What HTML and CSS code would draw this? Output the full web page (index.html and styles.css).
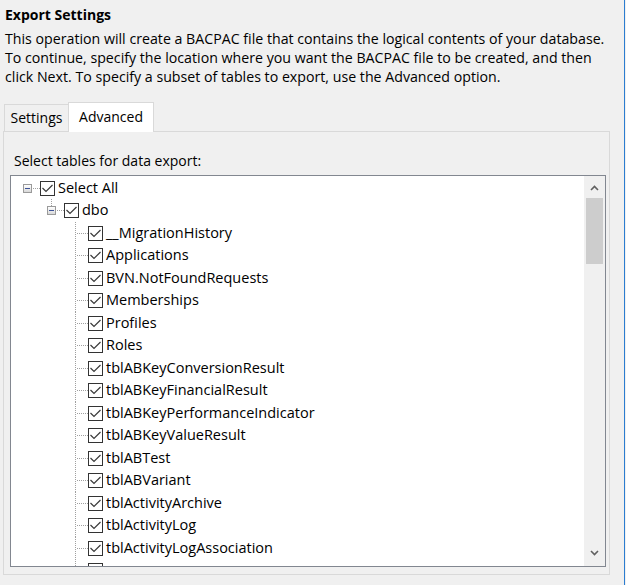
FILE: index.html
```html
<!DOCTYPE html>
<html>
<head>
<meta charset="utf-8">
<link rel="stylesheet" href="styles.css">
</head>
<body>
<div class="window">
  <h1 class="title">Export Settings</h1>
  <p class="desc">This operation will create a BACPAC file that contains the logical contents of your database.<br>To continue, specify the location where you want the BACPAC file to be created, and then<br>click Next. To specify a subset of tables to export, use the Advanced option.</p>
  <div class="tabs">
    <div class="tab-strip">
      <div class="tab">Settings</div>
      <div class="tab active">Advanced</div>
    </div>
    <div class="tab-panel">
      <div class="label">Select tables for data export:</div>
      <div class="tree">
        <div class="tree-items">
          <div class="row l0">
            <div class="gutter g-root"><span class="expander"><span class="minus"></span></span></div>
            <span class="check"><svg viewBox="0 0 13 13" width="13" height="13"><polyline points="1.5,6 5,9.5 11.5,3" fill="none" stroke="#3a3a3a" stroke-width="1.2"/></svg></span>
            <span class="text">Select All</span>
          </div>
          <div class="row l1">
            <div class="gutter g-last"><span class="expander"><span class="minus"></span></span></div>
            <span class="check"><svg viewBox="0 0 13 13" width="13" height="13"><polyline points="1.5,6 5,9.5 11.5,3" fill="none" stroke="#3a3a3a" stroke-width="1.2"/></svg></span>
            <span class="text">dbo</span>
          </div>
          <div class="row l2"><div class="gutter g-mid"></div><span class="check"><svg viewBox="0 0 13 13" width="13" height="13"><polyline points="1.5,6 5,9.5 11.5,3" fill="none" stroke="#3a3a3a" stroke-width="1.2"/></svg></span><span class="text">__MigrationHistory</span></div>
          <div class="row l2"><div class="gutter g-mid"></div><span class="check"><svg viewBox="0 0 13 13" width="13" height="13"><polyline points="1.5,6 5,9.5 11.5,3" fill="none" stroke="#3a3a3a" stroke-width="1.2"/></svg></span><span class="text">Applications</span></div>
          <div class="row l2"><div class="gutter g-mid"></div><span class="check"><svg viewBox="0 0 13 13" width="13" height="13"><polyline points="1.5,6 5,9.5 11.5,3" fill="none" stroke="#3a3a3a" stroke-width="1.2"/></svg></span><span class="text">BVN.NotFoundRequests</span></div>
          <div class="row l2"><div class="gutter g-mid"></div><span class="check"><svg viewBox="0 0 13 13" width="13" height="13"><polyline points="1.5,6 5,9.5 11.5,3" fill="none" stroke="#3a3a3a" stroke-width="1.2"/></svg></span><span class="text">Memberships</span></div>
          <div class="row l2"><div class="gutter g-mid"></div><span class="check"><svg viewBox="0 0 13 13" width="13" height="13"><polyline points="1.5,6 5,9.5 11.5,3" fill="none" stroke="#3a3a3a" stroke-width="1.2"/></svg></span><span class="text">Profiles</span></div>
          <div class="row l2"><div class="gutter g-mid"></div><span class="check"><svg viewBox="0 0 13 13" width="13" height="13"><polyline points="1.5,6 5,9.5 11.5,3" fill="none" stroke="#3a3a3a" stroke-width="1.2"/></svg></span><span class="text">Roles</span></div>
          <div class="row l2"><div class="gutter g-mid"></div><span class="check"><svg viewBox="0 0 13 13" width="13" height="13"><polyline points="1.5,6 5,9.5 11.5,3" fill="none" stroke="#3a3a3a" stroke-width="1.2"/></svg></span><span class="text">tblABKeyConversionResult</span></div>
          <div class="row l2"><div class="gutter g-mid"></div><span class="check"><svg viewBox="0 0 13 13" width="13" height="13"><polyline points="1.5,6 5,9.5 11.5,3" fill="none" stroke="#3a3a3a" stroke-width="1.2"/></svg></span><span class="text">tblABKeyFinancialResult</span></div>
          <div class="row l2"><div class="gutter g-mid"></div><span class="check"><svg viewBox="0 0 13 13" width="13" height="13"><polyline points="1.5,6 5,9.5 11.5,3" fill="none" stroke="#3a3a3a" stroke-width="1.2"/></svg></span><span class="text">tblABKeyPerformanceIndicator</span></div>
          <div class="row l2"><div class="gutter g-mid"></div><span class="check"><svg viewBox="0 0 13 13" width="13" height="13"><polyline points="1.5,6 5,9.5 11.5,3" fill="none" stroke="#3a3a3a" stroke-width="1.2"/></svg></span><span class="text">tblABKeyValueResult</span></div>
          <div class="row l2"><div class="gutter g-mid"></div><span class="check"><svg viewBox="0 0 13 13" width="13" height="13"><polyline points="1.5,6 5,9.5 11.5,3" fill="none" stroke="#3a3a3a" stroke-width="1.2"/></svg></span><span class="text">tblABTest</span></div>
          <div class="row l2"><div class="gutter g-mid"></div><span class="check"><svg viewBox="0 0 13 13" width="13" height="13"><polyline points="1.5,6 5,9.5 11.5,3" fill="none" stroke="#3a3a3a" stroke-width="1.2"/></svg></span><span class="text">tblABVariant</span></div>
          <div class="row l2"><div class="gutter g-mid"></div><span class="check"><svg viewBox="0 0 13 13" width="13" height="13"><polyline points="1.5,6 5,9.5 11.5,3" fill="none" stroke="#3a3a3a" stroke-width="1.2"/></svg></span><span class="text">tblActivityArchive</span></div>
          <div class="row l2"><div class="gutter g-mid"></div><span class="check"><svg viewBox="0 0 13 13" width="13" height="13"><polyline points="1.5,6 5,9.5 11.5,3" fill="none" stroke="#3a3a3a" stroke-width="1.2"/></svg></span><span class="text">tblActivityLog</span></div>
          <div class="row l2"><div class="gutter g-mid"></div><span class="check"><svg viewBox="0 0 13 13" width="13" height="13"><polyline points="1.5,6 5,9.5 11.5,3" fill="none" stroke="#3a3a3a" stroke-width="1.2"/></svg></span><span class="text">tblActivityLogAssociation</span></div>
          <div class="row l2"><div class="gutter g-mid"></div><span class="check"><svg viewBox="0 0 13 13" width="13" height="13"><polyline points="1.5,6 5,9.5 11.5,3" fill="none" stroke="#3a3a3a" stroke-width="1.2"/></svg></span></div>
        </div>
        <div class="scrollbar">
          <div class="sb-btn sb-up"><svg viewBox="0 0 9 6" width="9" height="6"><polyline points="1,5 4.5,1.5 8,5" fill="none" stroke="#606060" stroke-width="1.6"/></svg></div>
          <div class="sb-track"><div class="sb-thumb"></div></div>
          <div class="sb-btn sb-down"><svg viewBox="0 0 9 6" width="9" height="6"><polyline points="1,1 4.5,4.5 8,1" fill="none" stroke="#606060" stroke-width="1.6"/></svg></div>
        </div>
      </div>
    </div>
  </div>
</div>
</body>
</html>
```

FILE: styles.css
```css
* { box-sizing: border-box; }
html, body { margin: 0; padding: 0; }
body {
  font-family: "Open Sans", "Noto Sans", sans-serif;
  font-size: 14px;
  color: #000;
  background: #f0f0f0;
}
.window {
  width: 626px;
  height: 585px;
  overflow: hidden;
  padding-top: 5px;
  background:
    linear-gradient(to left, #f0f0f0 0 1px, #2b7dd1 1px 2px, transparent 2px),
    #f0f0f0;
}
.title {
  margin: 0 0 0 5px;
  font-size: 14px;
  font-weight: 700;
  line-height: 19px;
}
.desc {
  margin: 5px 0 0 5px;
  font-size: 14.2px;
  line-height: 19px;
}
.tabs {
  margin: 16px 0 0 3px;
  width: 607px;
}
.tab-strip {
  display: flex;
  align-items: flex-end;
  height: 29px;
  padding-left: 1px;
  position: relative;
  z-index: 1;
}
.tab {
  width: 65px;
  height: 27px;
  border: 1px solid #d9d9d9;
  border-bottom: none;
  background: #f0f0f0;
  text-align: center;
  line-height: 26px;
}
.tab.active {
  width: 86px;
  height: 30px;
  margin-left: -1px;
  margin-bottom: -1px;
  background: #fff;
  line-height: 27px;
}
.tab-panel {
  height: 444px;
  border: 1px solid #d9d9d9;
  padding: 19px 0 0 6px;
}
.label {
  padding-left: 4px;
  line-height: 19px;
}
.tree {
  margin-top: 5px;
  width: 596px;
  height: 392px;
  border: 1px solid #828790;
  background: #fff;
  display: flex;
}
.tree-items {
  flex: 1;
  overflow: hidden;
  padding-top: 0.75px;
}
.row {
  display: flex;
  align-items: center;
  height: 22.5px;
  font-size: 14.5px;
  line-height: 22.5px;
  white-space: nowrap;
}
.l0 { padding-left: 5px; }
.l1 { padding-left: 29px; }
.l2 { padding-left: 53px; }
.gutter {
  flex: none;
  width: 24px;
  height: 100%;
  display: flex;
  align-items: center;
  background-repeat: no-repeat;
}
.g-root {
  background-image: repeating-linear-gradient(to right, #a0a0a0 0 1px, transparent 1px 2px);
  background-position: 11px 50%;
  background-size: 13px 1px;
}
.g-last {
  background-image:
    repeating-linear-gradient(to right, #a0a0a0 0 1px, transparent 1px 2px),
    repeating-linear-gradient(to bottom, #a0a0a0 0 1px, transparent 1px 2px);
  background-position: 11px 50%, 11px 0;
  background-size: 13px 1px, 1px 50%;
}
.g-mid {
  background-image:
    repeating-linear-gradient(to right, #a0a0a0 0 1px, transparent 1px 2px),
    repeating-linear-gradient(to bottom, #a0a0a0 0 1px, transparent 1px 2px);
  background-position: 13px 50%, 11px 0;
  background-size: 11px 1px, 1px 100%;
}
.expander {
  width: 9px;
  height: 9px;
  margin-left: 7px;
  border: 1px solid #9a9a9a;
  background: linear-gradient(#ffffff, #d8d8d8);
  display: flex;
  align-items: center;
  justify-content: center;
}
.minus {
  width: 5px;
  height: 1px;
  background: #3b5196;
}
.check {
  flex: none;
  width: 15px;
  height: 15px;
  border: 1px solid #333;
  background: #fff;
  display: flex;
  align-items: center;
  justify-content: center;
}
.check svg { display: block; }
.text {
  margin-left: 3px;
}
.scrollbar {
  flex: none;
  width: 21px;
  background: #f0f0f0;
  display: flex;
  flex-direction: column;
}
.sb-btn {
  height: 22px;
  display: flex;
  justify-content: center;
}
.sb-up { align-items: flex-start; padding-top: 9px; }
.sb-down { align-items: flex-end; padding-bottom: 10px; }
.sb-btn svg { display: block; }
.sb-track {
  flex: 1;
}
.sb-thumb {
  height: 66px;
  margin: 0 2px;
  background: #cdcdcd;
}
```
